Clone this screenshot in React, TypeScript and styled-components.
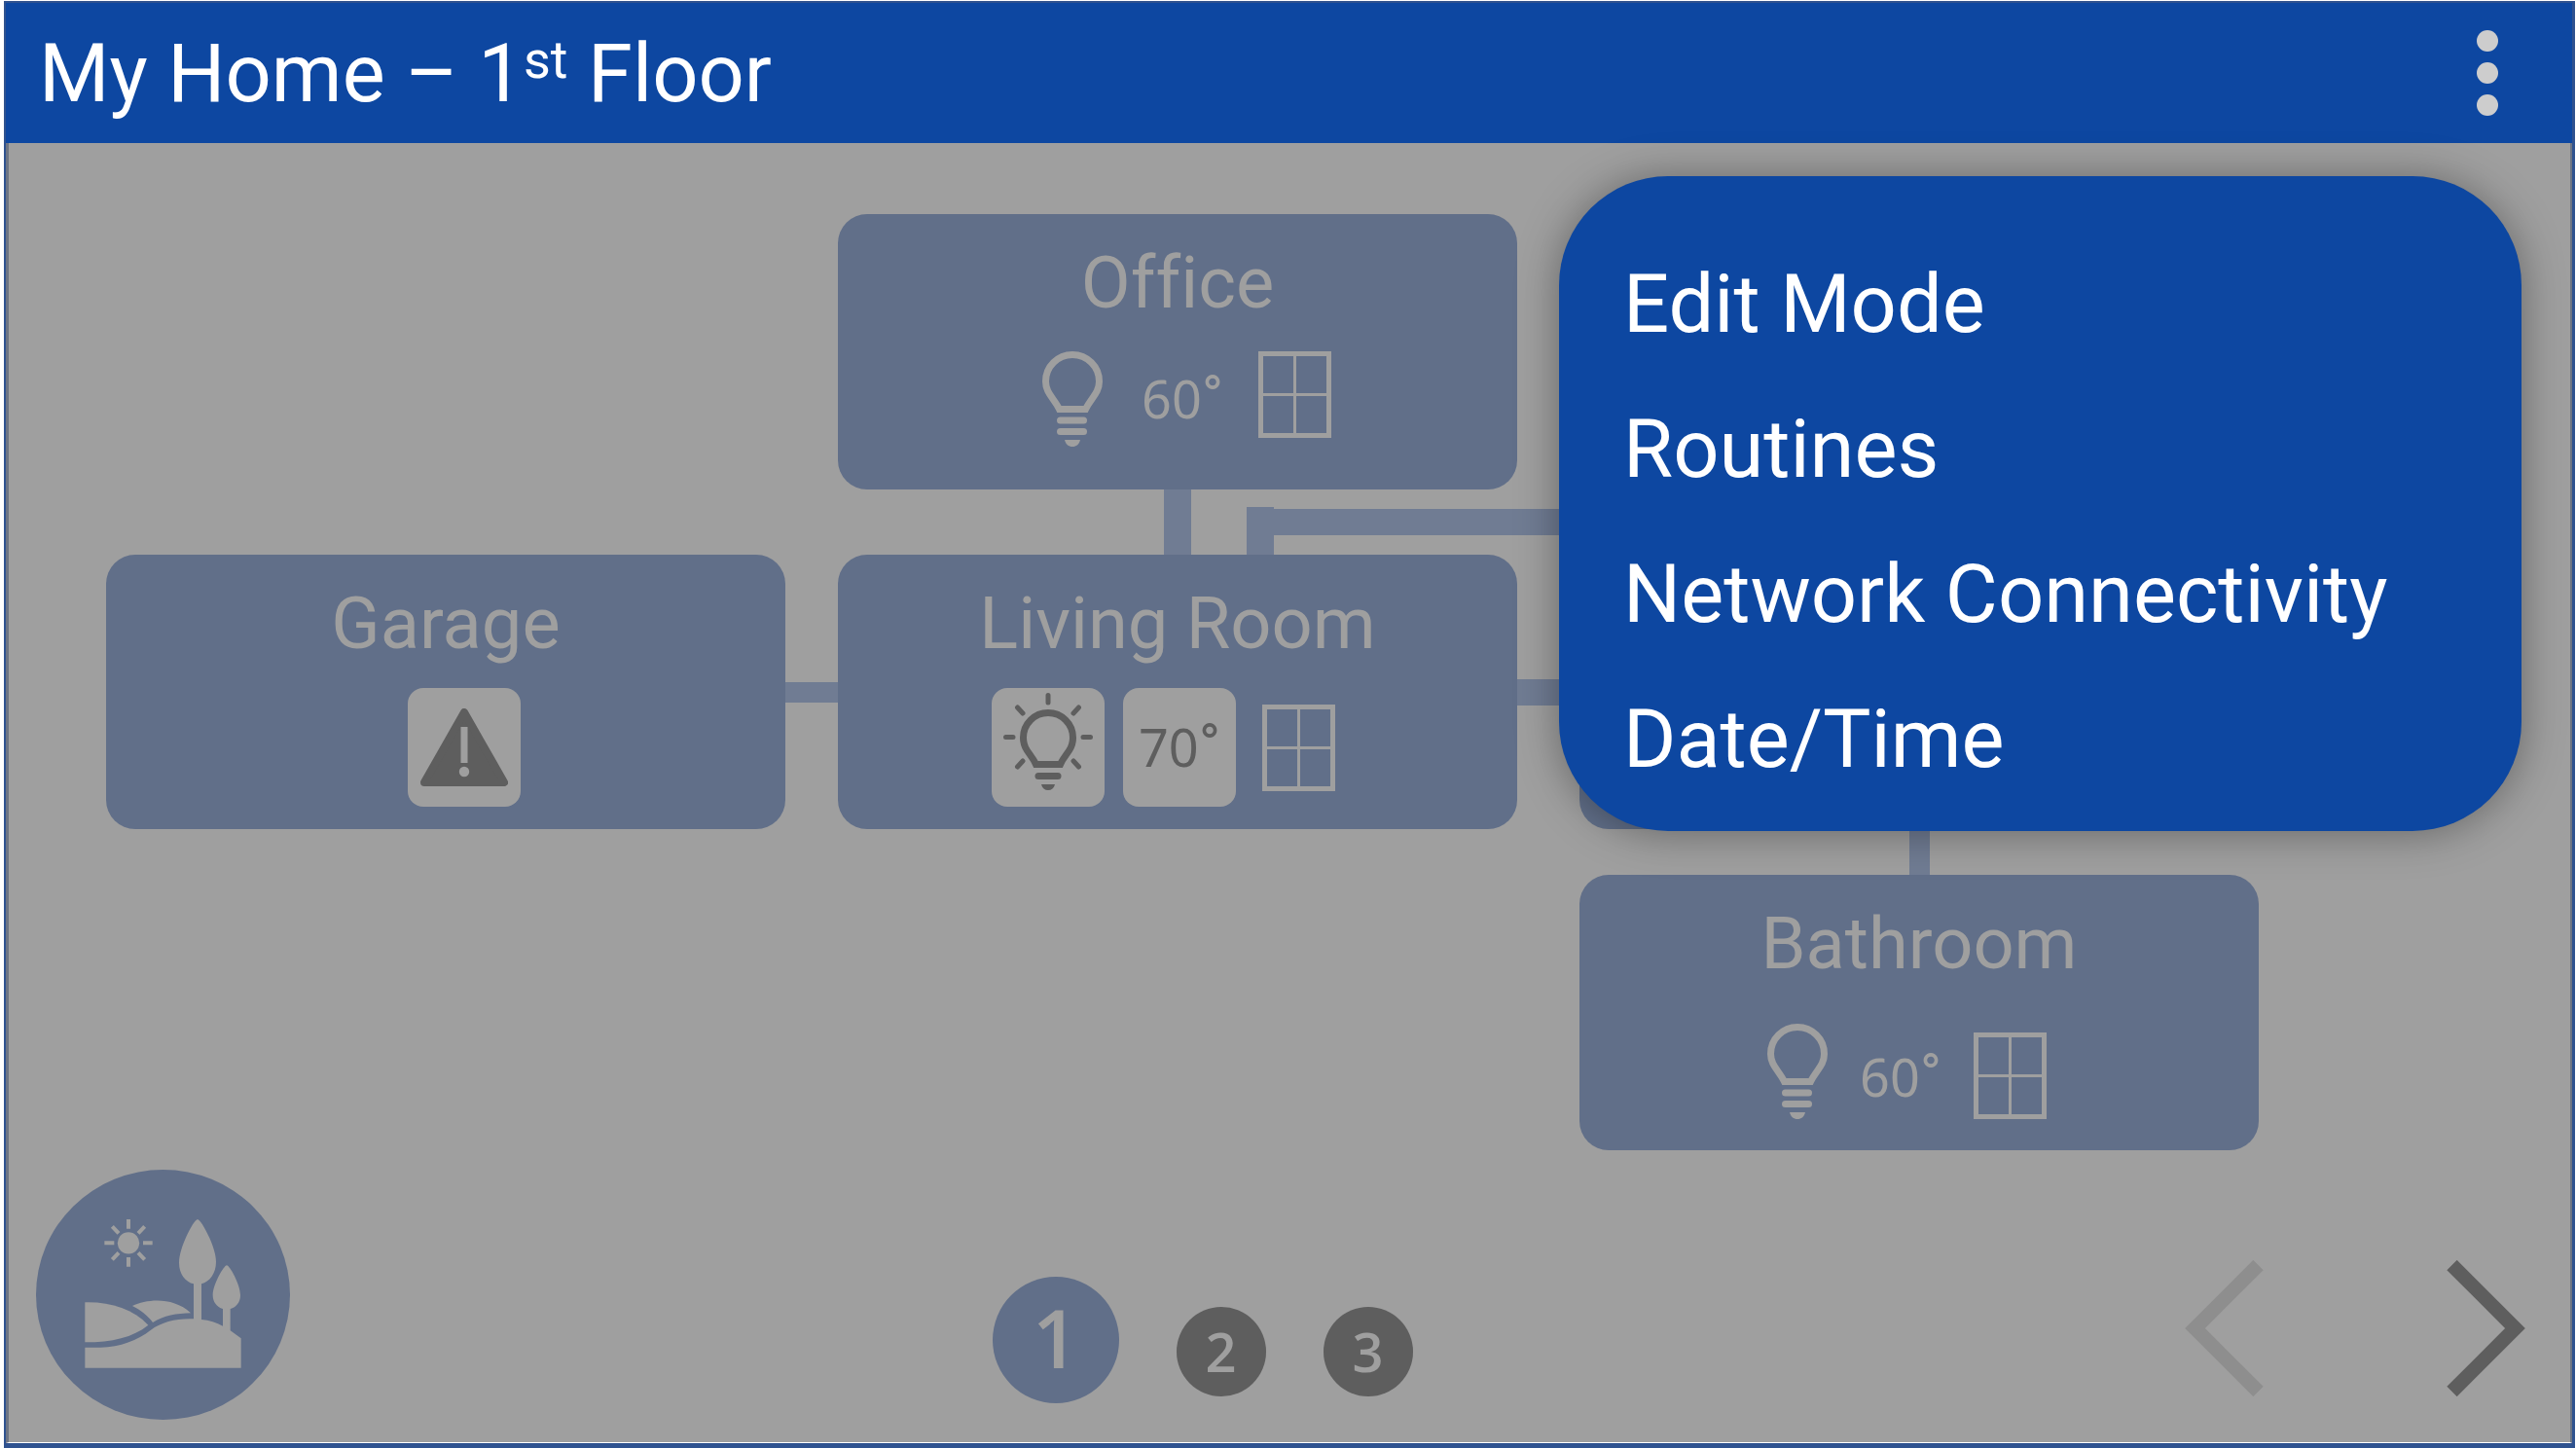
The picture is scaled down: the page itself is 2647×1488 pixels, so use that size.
import React from "react";
import styled, { createGlobalStyle } from "styled-components";

const color = {
  brand: "#0d47a1",
  frame: "#2f528f",
  edge: "#6c7484",
  surface: "#9f9f9f",
  room: "#616f89",
  link: "#707c93",
  dark: "#5e5e5e",
  faded: "#8e8e8e",
  dots: "#cdcdcd",
};

const GlobalStyle = createGlobalStyle`
  *, *::before, *::after { box-sizing: border-box; }
  body { margin: 0; background: #fff; font-family: Roboto, "Noto Sans", sans-serif; font-variant-ligatures: none; }
  button { border: 0; padding: 0; margin: 0; background: none; font: inherit; color: inherit; cursor: pointer; }
  h1, h2, p, ul { margin: 0; padding: 0; font-weight: 400; }
  svg { display: block; flex: none; }
`;

const Page = styled.div`
  display: flex;
  min-height: 100vh;
  padding: 1px 1px 0 4px;
`;

const Frame = styled.div`
  flex: 1;
  display: flex;
  flex-direction: column;
  border: solid ${color.frame};
  border-width: 2px 3px 5px 2px;
`;

const Header = styled.header`
  display: flex;
  align-items: center;
  justify-content: space-between;
  height: 144px;
  padding: 0 76px 0 34px;
  background: ${color.brand};
  color: #fff;
`;

const Title = styled.h1`
  padding-top: 2px;
  font-size: 83px;
  line-height: 142px;
  white-space: nowrap;

  sup {
    font-size: 54px;
    line-height: 0;
    vertical-align: 24px;
  }
`;

const MoreButton = styled.button`
  display: grid;
  gap: 11px;

  span {
    width: 22px;
    height: 22px;
    border-radius: 50%;
    background: ${color.dots};
  }
`;

const Stage = styled.main`
  position: relative;
  flex: 1;
  display: flex;
  flex-direction: column;
  justify-content: space-between;
  border: solid ${color.edge};
  border-width: 0 2px 1px 3px;
  border-bottom-color: #fff;
  background: ${color.surface};
`;

const FloorPlan = styled.div`
  display: grid;
  grid-template-columns: 698fr 54fr 698fr 64fr 698fr;
  grid-template-rows: 283px 67px 282px 47px 283px;
  padding: 73px 320px 0 100px;
`;

const RoomCard = styled.section<{ $col: number; $row: number }>`
  grid-column: ${(p) => p.$col};
  grid-row: ${(p) => p.$row};
  border-radius: 30px;
  background: ${color.room};
  color: ${color.surface};
`;

const RoomName = styled.h2`
  padding-top: 28px;
  font-size: 74px;
  line-height: 86px;
  text-align: center;
`;

const StatusRow = styled.div<{ $inset: number; $drop: number; $gap: number; $align: string }>`
  display: flex;
  align-items: ${(p) => p.$align};
  gap: ${(p) => p.$gap}px;
  padding: ${(p) => p.$drop}px 0 0 ${(p) => p.$inset}px;
`;

const TilePair = styled.div`
  display: flex;
  gap: 19px;
`;

const ReadingText = styled.p<{ $tall?: boolean }>`
  padding: ${(p) => (p.$tall ? "0 0 2px 4px" : "0 0 2px")};
  font-family: "Noto Sans", sans-serif;
  font-size: 54px;
  line-height: ${(p) => (p.$tall ? 96 : 84)}px;

  span {
    font-family: Roboto, sans-serif;
    font-size: 60px;
    line-height: 0;
    vertical-align: 2px;
  }
`;

const Tile = styled.div`
  display: flex;
  align-items: center;
  justify-content: center;
  width: 116px;
  height: 122px;
  border-radius: 16px;
  background: ${color.surface};
  color: ${color.dark};
`;

const Passage = styled.div<{ $col: number; $row: number; $thick: number; $upright?: boolean }>`
  grid-column: ${(p) => p.$col};
  grid-row: ${(p) => p.$row};
  place-self: center;
  width: ${(p) => (p.$upright ? `${p.$thick}px` : "100%")};
  height: ${(p) => (p.$upright ? "100%" : `${p.$thick}px`)};
  background: ${color.link};
`;

const Elbow = styled.div`
  grid-column: 3 / 6;
  grid-row: 2;
  display: flex;
  margin: 18px 349px 0 420px;

  &::before {
    content: "";
    width: 28px;
    background: ${color.link};
  }

  &::after {
    content: "";
    flex: 1;
    height: 27px;
    margin-top: 2px;
    background: ${color.link};
  }
`;

const Footer = styled.footer`
  display: grid;
  grid-template-columns: auto 722fr auto 794fr auto;
  align-items: end;
  padding: 0 46px 23px 28px;
`;

const SceneButton = styled.button`
  grid-column: 1;
  width: 261px;
  height: 257px;
  border-radius: 50%;
  background: ${color.room};
  color: ${color.surface};
`;

const Pager = styled.nav`
  grid-column: 3;
  display: flex;
  align-items: flex-end;
  gap: 59px;
  padding-bottom: 17px;
`;

const PageButton = styled.button<{ $current?: boolean }>`
  width: ${(p) => (p.$current ? 130 : 92)}px;
  height: ${(p) => (p.$current ? 130 : 92)}px;
  margin-bottom: ${(p) => (p.$current ? 0 : 7)}px;
  padding-bottom: ${(p) => (p.$current ? 6 : 2)}px;
  border-radius: 50%;
  background: ${(p) => (p.$current ? color.room : color.dark)};
  color: ${color.surface};
  font-family: "Open Sans", "Noto Sans", sans-serif;
  font-size: ${(p) => (p.$current ? 83 : 56)}px;
  font-weight: 600;
  line-height: 90px;
`;

const Arrows = styled.nav`
  grid-column: 5;
  display: flex;
  gap: 188px;
  padding-bottom: 24px;
`;

const ArrowButton = styled.button`
  color: ${color.dark};

  &:disabled {
    color: ${color.faded};
  }
`;

const Menu = styled.div`
  position: absolute;
  top: 34px;
  right: 50px;
  width: 989px;
  padding: 57px 0 20px;
  border-radius: 112px;
  background: ${color.brand};
  box-shadow: 0 2px 44px rgba(0, 0, 0, 0.36);
`;

const MenuItem = styled.button`
  display: block;
  width: 100%;
  padding: 0 66px;
  color: #fff;
  font-size: 83px;
  line-height: 149px;
  text-align: left;
  white-space: nowrap;
`;

const BulbIcon = () => (
  <svg width="62" height="98" viewBox="0 0 62 98" fill="currentColor" role="img" aria-label="Light off">
    <path
      d="M17.500 59.500C12 48 3.500 43 3.500 31A27.500 27.500 0 0 1 58.500 31C58.500 43 50 48 44.500 59.500Z"
      fill="none"
      stroke="currentColor"
      strokeWidth="7"
    />
    <rect x="15" y="67.500" width="31" height="7" rx="3.500" />
    <rect x="15" y="79" width="31" height="7" rx="3.500" />
    <path d="M23 91H39C38 95.500 35 98 31 98S24 95.500 23 91Z" />
  </svg>
);

const LitBulbIcon = () => (
  <svg width="92" height="112" viewBox="0 0 92 112" fill="currentColor" role="img" aria-label="Light on">
    <g fill="none" stroke="currentColor" strokeWidth="5" strokeLinecap="round">
      <path d="M46 2.500V10M2.500 45.500H10M82 45.500H89.500M14.500 15L20 21M77.500 15L72 21M20 70L14.500 76M72 70L77.500 76" />
    </g>
    <path
      d="M33.500 73.500C29 63 20.500 59 20.500 46A25.500 25.500 0 0 1 71.500 46C71.500 59 63 63 58.500 73.500Z"
      fill="none"
      stroke="currentColor"
      strokeWidth="7"
    />
    <rect x="32.500" y="82" width="27" height="7" rx="3.500" />
    <path d="M39 94H53C52 98 49.500 100 46 100S40 98 39 94Z" />
  </svg>
);

const WindowIcon = () => (
  <svg width="75" height="89" viewBox="0 0 75 89" fill="none" stroke="currentColor" role="img" aria-label="Window closed">
    <rect x="2.500" y="2.500" width="70" height="84" strokeWidth="5" />
    <path d="M37.500 5V84M5 44.500H70" strokeWidth="3" />
  </svg>
);

const WarningIcon = () => (
  <svg width="90" height="80" viewBox="0 0 90 80" role="img" aria-label="Warning">
    <path d="M45 4L86 76H4Z" fill="currentColor" stroke="currentColor" strokeWidth="8" strokeLinejoin="round" />
    <rect x="41.500" y="19" width="7" height="37" fill={color.surface} />
    <circle cx="45" cy="65" r="5.200" fill={color.surface} />
  </svg>
);

const LandscapeIcon = () => (
  <svg width="261" height="257" viewBox="111 66 783 771" fill="currentColor" aria-hidden="true">
    <circle cx="396" cy="292" r="33.500" />
    <path
      d="M396 219V248M396 336V365M322 291.500H352M441 291.500H470M346 241L366 262M446 241L426 262M346 343L366 322M446 343L426 322"
      stroke="currentColor"
      strokeWidth="12"
    />
    <path d="M262 475C340 473 410 495 457 545C410 583 345 598 262 598Z" />
    <path d="M408 486C455 464 535 458 588 508C545 509 505 516 471 537C455 515 435 500 408 486Z" />
    <path d="M262 614H310C370 613 425 592 464 561C500 534 545 524 597 526V418C572 412 552 388 552 353C552 304 598 219 609 219C620 219 666 304 666 350C666 386 646 411 621 418V528C645 530 668 538 687 548V495C668 490 656 473 656 453C656 420 690 361 699 361C708 361 741 420 741 453C741 475 728 490 710 495V562L743 586V677H262Z" />
  </svg>
);

const Chevron = ({ back }: { back?: boolean }) => (
  <svg width="81" height="140" viewBox="0 0 81 140" fill="none" stroke="currentColor" strokeWidth="14.600" aria-hidden="true">
    <path d={back ? "M75.500 5L10.500 70L75.500 135" : "M5.500 5L70.500 70L5.500 135"} />
  </svg>
);

const Reading = ({ value, tall }: { value: number; tall?: boolean }) => (
  <ReadingText $tall={tall}>
    {value}
    <span>°</span>
  </ReadingText>
);

const menuItems = ["Edit Mode", "Routines", "Network Connectivity", "Date/Time"];

export default function App() {
  return (
    <>
      <GlobalStyle />
      <Page>
        <Frame>
          <Header>
            <Title>
              My Home – 1<sup>st</sup> Floor
            </Title>
            <MoreButton aria-label="More options" aria-expanded="true">
              <span />
              <span />
              <span />
            </MoreButton>
          </Header>
          <Stage>
            <FloorPlan>
              <Passage $col={3} $row={2} $thick={28} $upright />
              <Elbow />
              <Passage $col={2} $row={3} $thick={21} />
              <Passage $col={4} $row={3} $thick={27} />
              <Passage $col={5} $row={4} $thick={21} $upright />

              <RoomCard $col={3} $row={1}>
                <RoomName>Office</RoomName>
                <StatusRow $inset={210} $drop={27} $gap={36} $align="flex-start">
                  <BulbIcon />
                  <Reading value={60} tall />
                  <WindowIcon />
                </StatusRow>
              </RoomCard>

              <RoomCard $col={1} $row={3}>
                <RoomName>Garage</RoomName>
                <StatusRow $inset={310} $drop={23} $gap={19} $align="center">
                  <Tile>
                    <WarningIcon />
                  </Tile>
                </StatusRow>
              </RoomCard>

              <RoomCard $col={3} $row={3}>
                <RoomName>Living Room</RoomName>
                <StatusRow $inset={158} $drop={23} $gap={27} $align="center">
                  <TilePair>
                    <Tile>
                      <LitBulbIcon />
                    </Tile>
                    <Tile>
                      <Reading value={70} />
                    </Tile>
                  </TilePair>
                  <WindowIcon />
                </StatusRow>
              </RoomCard>

              <RoomCard $col={5} $row={3} />

              <RoomCard $col={5} $row={5}>
                <RoomName>Bathroom</RoomName>
                <StatusRow $inset={193} $drop={39} $gap={33} $align="flex-end">
                  <BulbIcon />
                  <Reading value={60} />
                  <WindowIcon />
                </StatusRow>
              </RoomCard>
            </FloorPlan>

            <Footer>
              <SceneButton aria-label="Outdoor scene">
                <LandscapeIcon />
              </SceneButton>
              <Pager aria-label="Floors">
                <PageButton $current aria-current="page">
                  1
                </PageButton>
                <PageButton>2</PageButton>
                <PageButton>3</PageButton>
              </Pager>
              <Arrows aria-label="Change floor">
                <ArrowButton disabled aria-label="Previous floor">
                  <Chevron back />
                </ArrowButton>
                <ArrowButton aria-label="Next floor">
                  <Chevron />
                </ArrowButton>
              </Arrows>
            </Footer>

            <Menu role="menu">
              {menuItems.map((item) => (
                <MenuItem key={item} role="menuitem">
                  {item}
                </MenuItem>
              ))}
            </Menu>
          </Stage>
        </Frame>
      </Page>
    </>
  );
}
